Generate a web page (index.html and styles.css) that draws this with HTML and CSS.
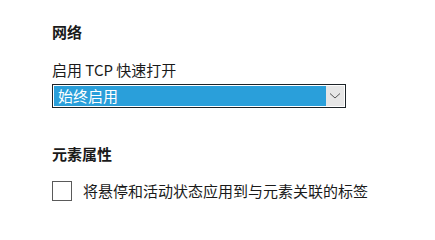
FILE: index.html
```html
<!DOCTYPE html>
<html lang="zh-CN">
<head>
<meta charset="utf-8">
<title>设置</title>
<link rel="stylesheet" href="styles.css">
</head>
<body>
<main class="page">
  <section class="group">
    <h2 class="heading">网络</h2>
    <div class="label">启用 TCP 快速打开</div>
    <div class="select">
      <div class="select-value">始终启用</div>
      <div class="select-arrow">
        <svg width="12" height="8" viewBox="0 0 12 8"><path d="M1 1.5 L6 6 L11 1.5" fill="none" stroke="#555" stroke-width="1"/></svg>
      </div>
    </div>
  </section>
  <section class="group group-second">
    <h2 class="heading">元素属性</h2>
    <label class="check-row">
      <span class="checkbox"></span>
      <span class="check-text">将悬停和活动状态应用到与元素关联的标签</span>
    </label>
  </section>
</main>
</body>
</html>
```

FILE: styles.css
```css
html, body {
  margin: 0;
  padding: 0;
  background: #ffffff;
}
body {
  width: 435px;
  height: 230px;
  overflow: hidden;
  font-family: "Noto Sans CJK SC", "Noto Sans", sans-serif;
  color: #1a1a1a;
  font-size: 15px;
}
.page {
  padding: 22px 0 0 52px;
}
.group {
  display: flex;
  flex-direction: column;
}
.heading {
  margin: 0;
  font-size: 15px;
  font-weight: 700;
  line-height: 20px;
  height: 20px;
}
.label {
  margin-top: 18px;
  line-height: 20px;
  height: 20px;
}
.select {
  margin-top: 4px;
  width: 294px;
  height: 24px;
  box-sizing: border-box;
  border: 1px solid #1c2328;
  padding: 1px;
  background: #ffffff;
  display: flex;
}
.select-value {
  flex: 1;
  background: #2a9fda;
  color: #ffffff;
  line-height: 20px;
  padding-left: 4px;
}
.select-arrow {
  width: 18px;
  background: #e6e6e6;
  display: flex;
  align-items: center;
  justify-content: center;
}
.group-second {
  margin-top: 36px;
}
.check-row {
  margin-top: 17px;
  display: flex;
  align-items: center;
}
.checkbox {
  width: 20px;
  height: 20px;
  box-sizing: border-box;
  border: 1px solid #5a5a5a;
  background: #fff;
}
.check-text {
  margin-left: 11px;
  line-height: 20px;
}
```
